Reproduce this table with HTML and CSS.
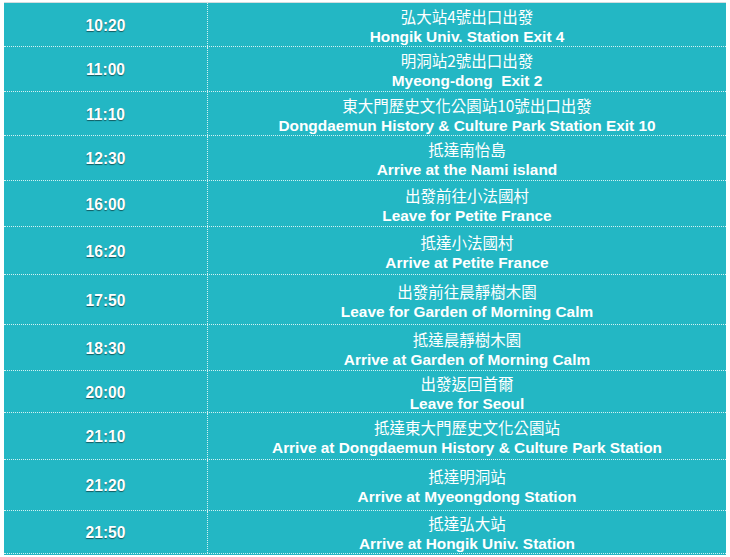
FILE: index.html
```html
<!DOCTYPE html>
<html lang="zh-Hant">
<head>
<meta charset="utf-8">
<title>Schedule</title>
<link rel="stylesheet" href="styles.css">
</head>
<body>
<div class="table">
  <div class="row h44"><div class="time">10:20</div><div class="desc"><span class="zh">弘大站4號出口出發</span><span class="en">Hongik Univ. Station Exit 4</span></div></div>
  <div class="row h45"><div class="time">11:00</div><div class="desc"><span class="zh">明洞站2號出口出發</span><span class="en">Myeong-dong&nbsp; Exit 2</span></div></div>
  <div class="row h44"><div class="time">11:10</div><div class="desc"><span class="zh">東大門歷史文化公園站10號出口出發</span><span class="en">Dongdaemun History &amp; Culture Park Station Exit 10</span></div></div>
  <div class="row h45"><div class="time">12:30</div><div class="desc"><span class="zh">抵達南怡島</span><span class="en">Arrive at the Nami island</span></div></div>
  <div class="row h46"><div class="time">16:00</div><div class="desc"><span class="zh">出發前往小法國村</span><span class="en">Leave for Petite France</span></div></div>
  <div class="row h48"><div class="time">16:20</div><div class="desc"><span class="zh">抵達小法國村</span><span class="en">Arrive at Petite France</span></div></div>
  <div class="row h50"><div class="time">17:50</div><div class="desc"><span class="zh">出發前往晨靜樹木園</span><span class="en">Leave for Garden of Morning Calm</span></div></div>
  <div class="row h46"><div class="time">18:30</div><div class="desc"><span class="zh">抵達晨靜樹木園</span><span class="en">Arrive at Garden of Morning Calm</span></div></div>
  <div class="row h42"><div class="time">20:00</div><div class="desc"><span class="zh">出發返回首爾</span><span class="en">Leave for Seoul</span></div></div>
  <div class="row h47"><div class="time">21:10</div><div class="desc"><span class="zh">抵達東大門歷史文化公園站</span><span class="en">Arrive at Dongdaemun History &amp; Culture Park Station</span></div></div>
  <div class="row h51"><div class="time">21:20</div><div class="desc"><span class="zh">抵達明洞站</span><span class="en">Arrive at Myeongdong Station</span></div></div>
  <div class="row h43"><div class="time">21:50</div><div class="desc"><span class="zh">抵達弘大站</span><span class="en">Arrive at Hongik Univ. Station</span></div></div>
</div>
</body>
</html>
```
FILE: styles.css
```css
html, body {
  margin: 0;
  padding: 0;
  background: #ffffff;
}

.table {
  margin: 2px 0 0 4px;
  width: 722px;
  background: #23b7c4;
  border-top: 1px solid #d3dcdf;
  padding-bottom: 1px;
  font-family: "Liberation Sans", Arial, "Noto Sans CJK TC", sans-serif;
  color: #ffffff;
}

.row {
  display: flex;
  box-sizing: border-box;
  border-bottom: 1px dotted rgba(255, 255, 255, 0.8);
}

.h42 { height: 42px; }
.h43 { height: 43px; }
.h44 { height: 44px; }
.h45 { height: 45px; }
.h46 { height: 46px; }
.h47 { height: 47px; }
.h48 { height: 48px; }
.h50 { height: 50px; }
.h51 { height: 51px; }

.time {
  width: 204px;
  flex: none;
  display: flex;
  align-items: center;
  justify-content: center;
  padding-top: 2px;
  box-sizing: border-box;
  border-right: 1px dotted rgba(255, 255, 255, 0.8);
  font-weight: bold;
  font-size: 15.6px;
  text-shadow: 0 1px 1px rgba(0, 0, 0, 0.5);
}

.desc {
  flex: 1;
  display: flex;
  flex-direction: column;
  align-items: center;
  justify-content: center;
  padding-top: 4px;
  box-sizing: border-box;
}

.zh {
  font-family: "Noto Sans CJK TC", "Liberation Sans", sans-serif;
  font-size: 15.5px;
  line-height: 20px;
  font-weight: normal;
}

.en {
  font-weight: bold;
  font-size: 15.4px;
  line-height: 22px;
}
```
